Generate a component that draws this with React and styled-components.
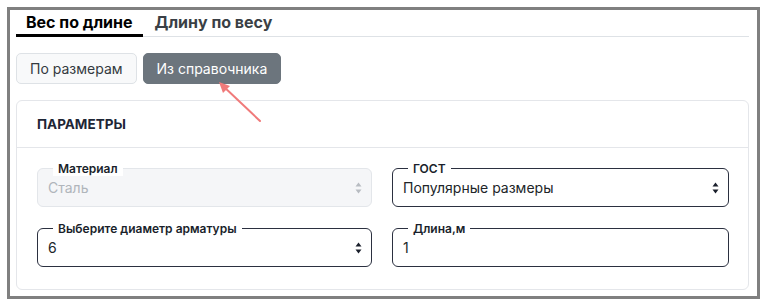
import React from "react"
import styled, { createGlobalStyle } from "styled-components"

const GlobalStyle = createGlobalStyle`
    body {
        margin: 0;
        background: #fff;
        font-family: 'Inter', 'Noto Sans', sans-serif;
        color: #212529;
    }
`

const Frame = styled.div`
    position: relative;
    box-sizing: border-box;
    width: 753px;
    height: 292px;
    margin: 7px 0 0 7px;
    border: 3px solid #808080;
    padding: 0 8px 0 6px;
    background: #fff;
`

const TabBar = styled.div`
    display: flex;
    gap: 2px;
    border-bottom: 1px solid #dee2e6;
`

const Tab = styled.div`
    box-sizing: border-box;
    height: 27px;
    padding: 1px 10px 0;
    margin-bottom: -1px;
    font-size: 16px;
    font-weight: 700;
    line-height: 22px;
    color: ${(p) => (p.$active ? "#000" : "#3a3f45")};
    border-bottom: 3px solid ${(p) => (p.$active ? "#000" : "transparent")};
`

const ButtonRow = styled.div`
    display: flex;
    gap: 6px;
    margin-top: 16px;
`

const ModeButton = styled.button`
    box-sizing: border-box;
    height: 31px;
    padding: 0 13px;
    border-radius: 5px;
    font-family: inherit;
    font-size: 14px;
    border: 1px solid ${(p) => (p.$active ? "#6c757d" : "#dee2e6")};
    background: ${(p) => (p.$active ? "#6c757d" : "#f8f9fa")};
    color: ${(p) => (p.$active ? "#fff" : "#343a40")};
`

const Card = styled.div`
    margin-top: 16px;
    border: 1px solid #e4e6ea;
    border-radius: 6px;
`

const CardHeader = styled.div`
    box-sizing: border-box;
    height: 47px;
    display: flex;
    align-items: center;
    padding: 0 20px;
    border-bottom: 1px solid #e4e6ea;
    font-size: 13.5px;
    font-weight: 700;
    color: #1e2636;
    text-transform: uppercase;
`

const CardBody = styled.div`
    display: grid;
    grid-template-columns: 335px 337px;
    column-gap: 20px;
    row-gap: 21px;
    padding: 20px 20px 22px;
`

const Field = styled.div`
    position: relative;
    box-sizing: border-box;
    height: 39px;
    display: flex;
    align-items: center;
    padding: 0 9px 0 10px;
    border-radius: 6px;
    border: 1px solid ${(p) => (p.$disabled ? "#e3e6ea" : "#2b3040")};
    background: ${(p) => (p.$disabled ? "#f5f6f8" : "#fff")};
`

const FieldLabel = styled.span`
    position: absolute;
    left: 15px;
    top: -8px;
    padding: 0 5px;
    background: #fff;
    font-size: 12px;
    font-weight: 600;
    line-height: 15px;
    color: #1a1f2b;
`

const Value = styled.span`
    flex: 1;
    font-size: 14px;
    color: ${(p) => (p.$disabled ? "#b0b5bb" : "#212529")};
`

const Arrow = styled.svg`
    position: absolute;
    left: 198px;
    top: 69px;
    pointer-events: none;
`

function SelectIcon({ color }) {
    return (
        <svg width="7" height="12" viewBox="0 0 7 12">
            <path d="M3.5 0.5 L6.5 4.5 H0.5 Z" fill={color} />
            <path d="M3.5 11.5 L6.5 7.5 H0.5 Z" fill={color} />
        </svg>
    )
}

function InputField({ label, value, select, disabled }) {
    return (
        <Field $disabled={disabled}>
            <FieldLabel>{label}</FieldLabel>
            <Value $disabled={disabled}>{value}</Value>
            {select && <SelectIcon color={disabled ? "#b8bcc2" : "#1a1f2b"} />}
        </Field>
    )
}

export default function App() {
    return (
        <>
            <GlobalStyle />
            <Frame>
                <TabBar>
                    <Tab $active>Вес по длине</Tab>
                    <Tab>Длину по весу</Tab>
                </TabBar>
                <ButtonRow>
                    <ModeButton>По размерам</ModeButton>
                    <ModeButton $active>Из справочника</ModeButton>
                </ButtonRow>
                <Card>
                    <CardHeader>Параметры</CardHeader>
                    <CardBody>
                        <InputField label="Материал" value="Сталь" select disabled />
                        <InputField label="ГОСТ" value="Популярные размеры" select />
                        <InputField label="Выберите диаметр арматуры" value="6" select />
                        <InputField label="Длина,м" value="1" />
                    </CardBody>
                </Card>
                <Arrow width="60" height="50" viewBox="0 0 60 50">
                    <line x1="52" y1="42" x2="14" y2="6" stroke="#f07a7a" strokeWidth="2" strokeLinecap="round" />
                    <path d="M11 3 L22 7 L15 14 Z" fill="#f07a7a" />
                </Arrow>
            </Frame>
        </>
    )
}
